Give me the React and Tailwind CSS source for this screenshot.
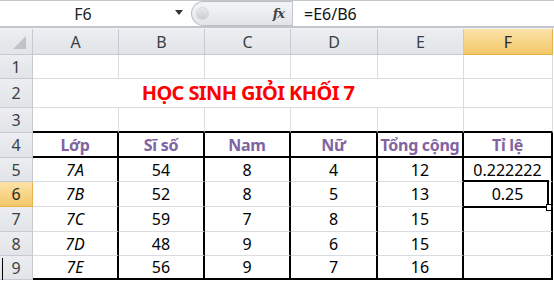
import React from 'react';

// cột A..F, độ rộng giống Excel trong ảnh
const COLS = [
  { key: 'A', w: 'w-[86px]' },
  { key: 'B', w: 'w-[86px]' },
  { key: 'C', w: 'w-[86px]' },
  { key: 'D', w: 'w-[87px]' },
  { key: 'E', w: 'w-[86px]' },
  { key: 'F', w: 'w-[89px]' },
];

const HEADERS = ['Lớp', 'Sĩ số', 'Nam', 'Nữ', 'Tổng cộng', 'Tỉ lệ'];

const DATA = [
  { n: 5, h: 'h-[24px]', v: ['7A', 54, 8, 4, 12, '0.222222'] },
  { n: 6, h: 'h-[25px]', v: ['7B', 52, 8, 5, 13, '0.25'] },
  { n: 7, h: 'h-[25px]', v: ['7C', 59, 7, 8, 15, ''] },
  { n: 8, h: 'h-[24px]', v: ['7D', 48, 9, 6, 15, ''] },
  { n: 9, h: 'h-[24px]', v: ['7E', 56, 9, 7, 16, ''] },
];

const grid = 'border-r border-b border-[#dadcdf]';

const RowHead = ({ active, children }) => (
  <div
    className={`relative w-[33px] shrink-0 flex items-center justify-center text-[16px] border-r border-b ${
      active
        ? 'bg-gradient-to-b from-[#fbe3a8] to-[#f3c768] border-[#e8b14c] text-[#2b2b2b]'
        : 'bg-gradient-to-b from-[#eceef1] to-[#e1e4e8] border-[#c5cad1] text-[#3a3f47]'
    }`}
  >
    {children}
  </div>
);

const App = () => {
  return (
    <div className="w-[554px] h-[282px] overflow-hidden bg-white font-['Noto_Sans',sans-serif] select-none">
      {/* Formula bar */}
      <div className="border-t border-[#c3c7cd] h-[26px] flex">
        <div className="w-[191px] relative flex items-center">
          <span className="w-[166px] text-center text-[16px] text-[#222]">F6</span>
          <span className="absolute left-[175px] top-[9px] w-0 h-0 border-l-[4px] border-r-[4px] border-t-[5px] border-l-transparent border-r-transparent border-t-[#333]"></span>
        </div>
        <div className="w-[101px] h-[25px] rounded-l-full border border-r-0 border-[#b9bdc4] bg-gradient-to-b from-[#f4f5f7] to-[#e2e4e8] flex items-center justify-between pl-[4px] pr-[8px]">
          <span className="w-[13px] h-[13px] rounded-full bg-gradient-to-b from-[#e9eaec] to-[#c9ccd1] border border-[#d3d6da]"></span>
          <span className="font-['DejaVu_Serif',serif] italic font-bold text-[13px] text-[#444] tracking-[-1px]">fx</span>
        </div>
        <div className="flex-1 border-l border-[#c3c7cd] flex items-center pl-[11px] text-[16px] text-[#111]">
          =E6/B6
        </div>
      </div>
      <div className="h-[3px] border-t-2 border-[#c2c6cc] bg-[#f1f2f4]"></div>

      {/* Column headers */}
      <div className="flex h-[26px]">
        <div className="relative w-[33px] shrink-0 bg-gradient-to-b from-[#eceef1] to-[#e1e4e8] border-r border-b border-[#c5cad1]">
          <svg className="absolute right-[6px] bottom-[5px]" width="13" height="13" viewBox="0 0 13 13">
            <polygon points="13,0 13,13 0,13" fill="#bfc3c9" />
          </svg>
        </div>
        {COLS.map((c) => (
          <div
            key={c.key}
            className={`${c.w} shrink-0 flex items-center justify-center text-[16px] border-r border-b ${
              c.key === 'F'
                ? 'bg-gradient-to-b from-[#fbe3a8] to-[#f3c768] border-[#e8b14c] text-[#2b2b2b]'
                : 'bg-gradient-to-b from-[#eceef1] to-[#e1e4e8] border-[#c5cad1] text-[#3a3f47]'
            }`}
          >
            {c.key}
          </div>
        ))}
      </div>

      {/* Row 1 */}
      <div className="flex h-[24px]">
        <RowHead>1</RowHead>
        {COLS.map((c) => (
          <div key={c.key} className={`${c.w} shrink-0 ${grid}`}></div>
        ))}
      </div>

      {/* Row 2 - tiêu đề gộp A2:E2 */}
      <div className="flex h-[29px]">
        <RowHead>2</RowHead>
        <div className={`w-[431px] shrink-0 ${grid} flex items-center justify-center text-[20px] font-bold text-[#ff0000] tracking-[-0.6px]`}>
          HỌC SINH GIỎI KHỐI 7
        </div>
        <div className={`w-[89px] shrink-0 ${grid}`}></div>
      </div>

      {/* Row 3 */}
      <div className="flex h-[25px]">
        <RowHead>3</RowHead>
        {COLS.map((c) => (
          <div key={c.key} className={`${c.w} shrink-0 border-r border-[#dadcdf] border-b-2 border-b-black`}></div>
        ))}
      </div>

      {/* Row 4 - header bảng */}
      <div className="flex h-[25px]">
        <RowHead>4</RowHead>
        {COLS.map((c, i) => (
          <div
            key={c.key}
            className={`${c.w} shrink-0 border-r-2 border-b-2 border-black flex items-center justify-center text-[16px] font-bold text-[#8064a2] tracking-[-0.3px]`}
          >
            {HEADERS[i]}
          </div>
        ))}
      </div>

      {/* Data rows */}
      {DATA.map((r) => (
        <div key={r.n} className={`flex ${r.h}`}>
          <RowHead active={r.n === 6}>
            {r.n === 9 && <span className="absolute left-[2px] top-[2px] w-[1px] h-[22px] bg-black"></span>}
            {r.n}
          </RowHead>
          {COLS.map((c, i) => (
            <div
              key={c.key}
              className={`relative ${c.w} shrink-0 border-r-2 border-r-black border-b ${
                r.n === 9 ? 'border-b-2 border-b-black' : 'border-b-[#dadcdf]'
              } flex items-center justify-center text-[16px] text-black ${i === 0 ? 'italic' : ''}`}
            >
              {r.v[i]}
              {r.n === 6 && c.key === 'F' && (
                <>
                  <span className="absolute left-[-1px] top-[-2px] right-[2px] bottom-[-2px] border-2 border-black border-l"></span>
                  <span className="absolute right-[-1px] bottom-[-5px] w-[6px] h-[7px] bg-white border border-black"></span>
                </>
              )}
            </div>
          ))}
        </div>
      ))}
    </div>
  );
};

export default App;
